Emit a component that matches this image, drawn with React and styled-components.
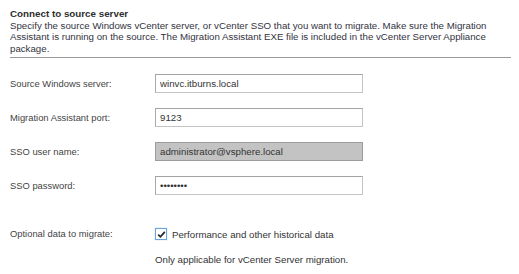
import styled, { createGlobalStyle } from "styled-components";

const Global = createGlobalStyle`
  body {
    margin: 0;
    background: #ffffff;
    font-family: "Liberation Sans", Arial, sans-serif;
    color: #333333;
  }
`;

export default function App() {
  return (
    <>
      <Global />
      <Page>
        <Header>
          <h1>Connect to source server</h1>
          <p>
            Specify the source Windows vCenter server, or vCenter SSO that you
            want to migrate. Make sure the Migration Assistant is running on the
            source. The Migration Assistant EXE file is included in the vCenter
            Server Appliance package.
          </p>
        </Header>

        <Form>
          <Label>Source Windows server:</Label>
          <Field defaultValue="winvc.itburns.local" />

          <Label>Migration Assistant port:</Label>
          <Field defaultValue="9123" />

          <Label>SSO user name:</Label>
          <Field defaultValue="administrator@vsphere.local" disabled />

          <Label>SSO password:</Label>
          <Field type="password" defaultValue="password" />
        </Form>

        <Optional>
          <Label>Optional data to migrate:</Label>
          <div>
            <CheckRow>
              <CheckBox>
                <svg width="9" height="9" viewBox="0 0 9 9">
                  <path
                    d="M1.2 4.6 L3.4 6.8 L7.8 1.8"
                    fill="none"
                    stroke="#2b2b2b"
                    strokeWidth="1.8"
                  />
                </svg>
              </CheckBox>
              <span>Performance and other historical data</span>
            </CheckRow>
            <Note>Only applicable for vCenter Server migration.</Note>
          </div>
        </Optional>
      </Page>
    </>
  );
}

const Page = styled.div`
  width: 519px;
  height: 274px;
  overflow: hidden;
  font-size: 9.7px;
`;

const Header = styled.div`
  margin: 0 8px 0 10px;
  padding-top: 8px;
  padding-bottom: 3px;
  border-bottom: 1px solid #9a9a9a;

  h1 {
    margin: 0;
    font-size: 9.8px;
    line-height: 12px;
    font-weight: bold;
    color: #2e2e2e;
  }

  p {
    margin: 0;
    font-size: 9.7px;
    line-height: 11.4px;
    color: #333340;
  }
`;

const Form = styled.div`
  display: grid;
  grid-template-columns: 145px 208px;
  row-gap: 15px;
  align-items: center;
  padding: 16px 0 0 10px;
`;

const Label = styled.span`
  color: #444444;
  font-size: 9.4px;
`;

const Field = styled.input`
  box-sizing: border-box;
  height: 19px;
  width: 208px;
  margin: 0;
  padding: 0 4px;
  font-family: "Liberation Sans", Arial, sans-serif;
  font-size: 9.7px;
  color: #333333;
  background: #ffffff;
  border: 1px solid #c4c4c4;
  border-top-color: #a3a3a3;
  border-left-color: #a8a8a8;
  outline: none;

  &:disabled {
    background: #c3c3c3;
    color: #333333;
    border-color: #9c9c9c;
  }
`;

const Optional = styled.div`
  display: grid;
  grid-template-columns: 145px auto;
  padding: 33px 0 0 10px;
`;

const CheckRow = styled.div`
  display: flex;
  align-items: center;
  gap: 5px;
  height: 12px;
  color: #333333;
`;

const CheckBox = styled.span`
  box-sizing: border-box;
  width: 12px;
  height: 12px;
  display: flex;
  align-items: center;
  justify-content: center;
  background: #ffffff;
  border: 1px solid #6aa3dc;
  box-shadow: 0 0 1px #9cc6ee;
`;

const Note = styled.div`
  margin-top: 14px;
  color: #333333;
`;
